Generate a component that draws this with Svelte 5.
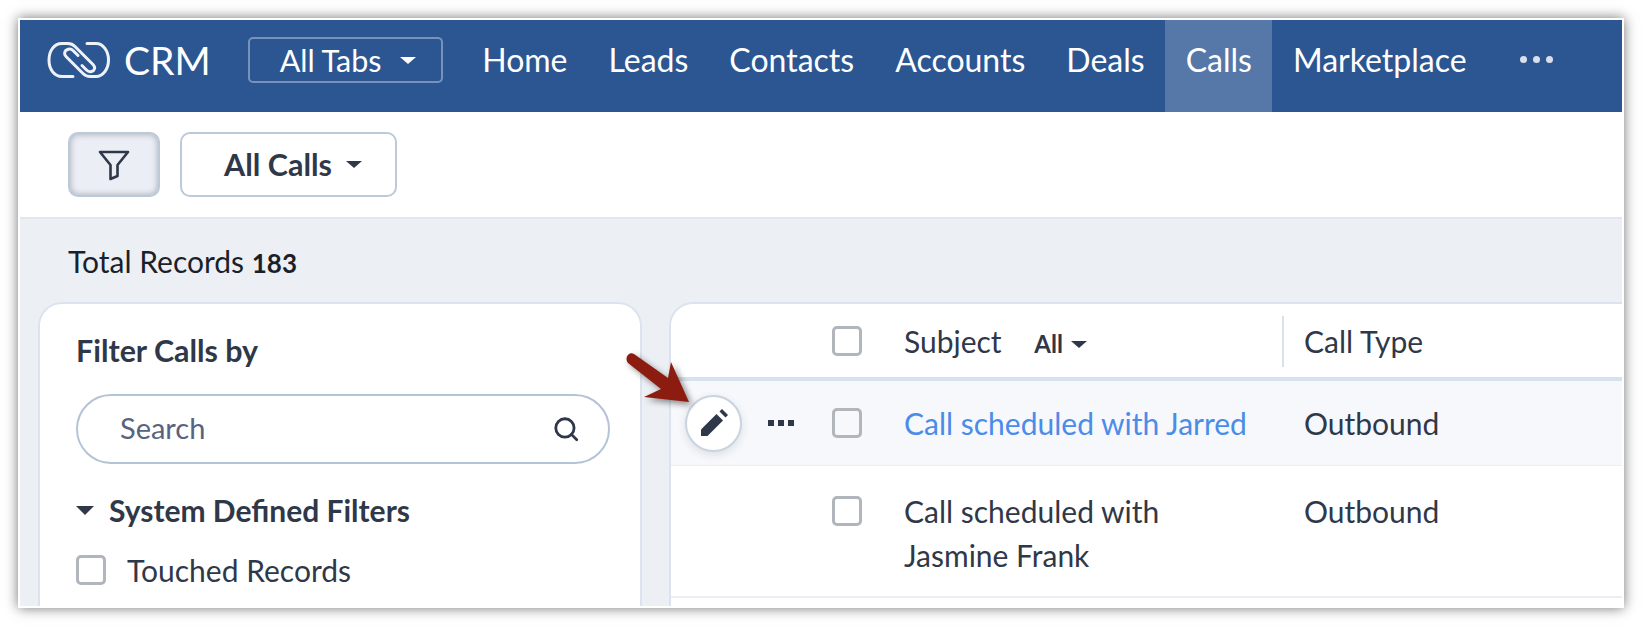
<script>
	const tabs = ['Home', 'Leads', 'Contacts', 'Accounts', 'Deals', 'Calls', 'Marketplace'];
</script>

<div class="shot">
	<header class="topbar">
		<div class="logo">
			<svg width="80" height="50" viewBox="0 0 80 50" fill="none" stroke="#eef1f6" stroke-width="3" stroke-linecap="round" stroke-linejoin="round">
				<path d="M33 41.500L22 41.500C14 41.500 9 34 9 25C9 16 14 8.500 22 8.500L28 8.500C31 8.500 33 9.500 35 11.500L53 29.500C56 32.500 54.500 36 51.500 36.500C49.500 37 47.500 36 46.500 35L42 30.500" />
				<path d="M47 8.500L56 8.500C63 8.500 68.500 16 68.500 25C68.500 34 63 41.500 56 41.500L50 41.500C47 41.500 45 40.500 43 38.500L26 21.500C23.500 19 24.500 15.500 27.500 14.500C30 13.500 32 14.500 33.500 16L38 20.500" />
			</svg>
			<span>CRM</span>
		</div>
		<button class="all-tabs">All Tabs <i class="caret"></i></button>
		<nav>
			{#each tabs as tab}
				<a href="#top" class:active={tab === 'Calls'}>{tab}</a>
			{/each}
			<span class="more"><b></b><b></b><b></b></span>
		</nav>
	</header>

	<div class="toolbar">
		<button class="filter-btn" aria-label="Filter">
			<svg width="32" height="32" viewBox="0 0 32 32" fill="none" stroke="#2f3849" stroke-width="2.600" stroke-linejoin="round">
				<path d="M2 3H30L19.500 16V27L12.500 30V16Z" />
			</svg>
		</button>
		<button class="view-btn"><span>All Calls</span> <i class="caret dark"></i></button>
	</div>

	<main class="content">
		<p class="total">Total Records <strong>183</strong></p>
		<div class="panels">
			<aside class="side">
				<h2>Filter Calls by</h2>
				<div class="search">
					<span>Search</span>
					<svg width="28" height="28" viewBox="0 0 26 26" fill="none" stroke="#2f3849" stroke-width="2.600" stroke-linecap="round">
						<circle cx="12" cy="12" r="8.500" />
						<path d="M18 18L23 23" />
					</svg>
				</div>
				<h3><i class="caret dark wide"></i>System Defined Filters</h3>
				<label class="touched"><i class="check"></i>Touched Records</label>
			</aside>

			<section class="table">
				<div class="row head">
					<div class="actions"></div>
					<div class="box"><i class="check"></i></div>
					<div class="subject">Subject <small>All</small><i class="caret dark"></i></div>
					<div class="type"><span class="divider"></span>Call Type</div>
				</div>
				<div class="row hover">
					<div class="actions">
						<span class="edit">
							<svg width="30" height="30" viewBox="0 0 30 30" fill="#2f3849">
								<path d="M2 28V21.500L17.500 6L24 12.500L8.500 28Z" />
								<path d="M20.500 3.500L23 1L29 7L26.500 9.500Z" />
							</svg>
						</span>
						<span class="dots"><b></b><b></b><b></b></span>
					</div>
					<div class="box"><i class="check"></i></div>
					<div class="subject link">Call scheduled with Jarred</div>
					<div class="type">Outbound</div>
				</div>
				<div class="row tall">
					<div class="actions"></div>
					<div class="box"><i class="check"></i></div>
					<div class="subject">Call scheduled with<br />Jasmine Frank</div>
					<div class="type">Outbound</div>
				</div>
			</section>
		</div>

		<svg class="arrow" width="70" height="60" viewBox="0 0 70 60">
			<path d="M9 2L43 26L46 10L64 50L19 45L36 37L3 11C-1 6 4 -1 9 2Z" fill="#8d1c10" />
		</svg>
	</main>
</div>

<style>
	:global(body) { margin: 0; background: #fff; font-family: Lato, "Open Sans", sans-serif; }
	:global(#app) { height: 626px; overflow: hidden; }
	.shot { position: relative; box-sizing: border-box; width: 1606px; height: 590px; margin: 18px; border: 2px solid #fff; overflow: hidden; background: #fff; box-shadow: 0 0 12px rgba(0,0,0,.55); color: #2f3849; }
	button { font-family: inherit; }
	.caret { display: inline-block; width: 0; height: 0; border-left: 8px solid transparent; border-right: 8px solid transparent; border-top: 7px solid #fff; }
	.caret.dark { border-top-color: #2f3849; }
	.caret.wide { border-left-width: 9px; border-right-width: 9px; border-top-width: 9px; }

	.topbar { display: flex; align-items: center; height: 92px; background: #2c5692; color: #fff; padding-left: 20px; }
	.logo { display: flex; align-items: center; gap: 4px; font-size: 39px; margin-top: -12px; }
	.all-tabs { display: flex; align-items: center; gap: 18px; height: 46px; box-sizing: border-box; width: 195px; margin-left: 37px; margin-top: -12px; padding: 0 0 0 30px; background: none; border: 2px solid #7793bb; border-radius: 5px; color: #fff; font-size: 30.500px; }
	nav { display: flex; height: 92px; margin-left: 19px; }
	nav a { display: block; padding: 22px 20.500px 0; color: #fff; font-size: 32px; text-decoration: none; line-height: 36px; }
	nav a.active { background: #5578a8; }
	.more { display: flex; gap: 6px; padding: 36px 0 0 33px; }
	.more b { width: 7px; height: 7px; border-radius: 50%; background: #d9e0ea; }

	.toolbar { display: flex; gap: 20px; box-sizing: border-box; height: 107px; padding: 20px 0 0 48px; background: #fff; border-bottom: 2px solid #e2e6ed; }
	.filter-btn { display: flex; align-items: center; justify-content: center; box-sizing: border-box; width: 92px; height: 65px; padding: 0; background: #ebeef4; border: 2px solid #bcc9d8; border-radius: 10px; box-shadow: inset 0 0 6px rgba(70,80,100,.45); }
	.view-btn { display: flex; align-items: center; gap: 14px; box-sizing: border-box; width: 217px; height: 65px; padding: 0 0 0 42px; background: #fff; border: 2px solid #bcc9d8; border-radius: 10px; color: #2f3849; font-size: 30.500px; font-weight: 700; }
	.view-btn span { margin-top: -2px; }

	.content { position: relative; height: 400px; background: #ecf0f5; }
	.total { margin: 0; padding: 24px 0 0 48px; height: 50px; color: #1b1f29; font-size: 30px; line-height: 36px; }
	.total strong { font-size: 26px; }
	.panels { display: flex; gap: 27px; padding: 9px 0 0 18px; }
	.side { box-sizing: border-box; width: 604px; height: 330px; padding: 28px 30px 0 36px; background: #fff; border: 2px solid #dbe4ee; border-radius: 24px; }
	.side h2 { margin: 0; font-size: 30.400px; font-weight: 700; line-height: 36px; }
	.search { display: flex; align-items: center; justify-content: space-between; box-sizing: border-box; width: 534px; height: 70px; margin-top: 26px; padding: 0 28px 0 42px; border: 2px solid #b5c3d6; border-radius: 35px; color: #58647d; font-size: 29px; }
	.search span { margin-top: -3px; }
	.side h3 { display: flex; align-items: center; gap: 15px; margin: 28px 0 0; font-size: 30px; font-weight: 700; line-height: 36px; }
	.touched { display: flex; align-items: center; gap: 21px; margin-top: 24px; font-size: 30px; line-height: 36px; }
	.check { display: block; flex: none; box-sizing: border-box; width: 30px; height: 30px; border: 3px solid #b1b5bc; border-radius: 5px; background: transparent; }

	.table { flex: 1; height: 330px; background: #fff; border: 2px solid #dbe4ee; border-right: 0; border-radius: 24px 0 0 0; font-size: 30px; }
	.row { display: flex; align-items: center; }
	.head { height: 73px; border-bottom: 4px solid #d8e1ec; }
	.hover { height: 84px; background: #f6f8fb; border-bottom: 1px solid #ebeef3; }
	.tall { align-items: flex-start; height: 130px; border-bottom: 2px solid #ebeef3; }
	.tall > div { margin-top: 23px; line-height: 44px; }
	.tall .box { margin-top: 30px; line-height: 0; }
	.actions { display: flex; align-items: center; flex: none; box-sizing: border-box; width: 161px; padding-left: 14px; }
	.edit { display: flex; align-items: center; justify-content: center; box-sizing: border-box; width: 57px; height: 57px; background: #fff; border: 2px solid #c9d3e2; border-radius: 50%; box-shadow: 0 3px 8px rgba(40,50,70,.12); }
	.dots { display: flex; gap: 4px; margin-left: 26px; }
	.dots b { width: 6px; height: 6px; background: #2f3849; }
	.box { flex: none; width: 72px; }
	.subject { position: relative; flex: none; width: 400px; }
	.subject small { margin-left: 25px; font-size: 24px; font-weight: 700; }
	.subject .caret { margin-left: 8px; vertical-align: 5px; }
	.link { color: #4a8ce8; }
	.type { position: relative; }
	.divider { position: absolute; left: -22px; top: -7px; width: 2px; height: 51px; background: #d8e1ec; }
	.arrow { position: absolute; left: 605px; top: 133px; overflow: visible; filter: drop-shadow(3px 3px 3px rgba(0,0,0,.45)); }
</style>
